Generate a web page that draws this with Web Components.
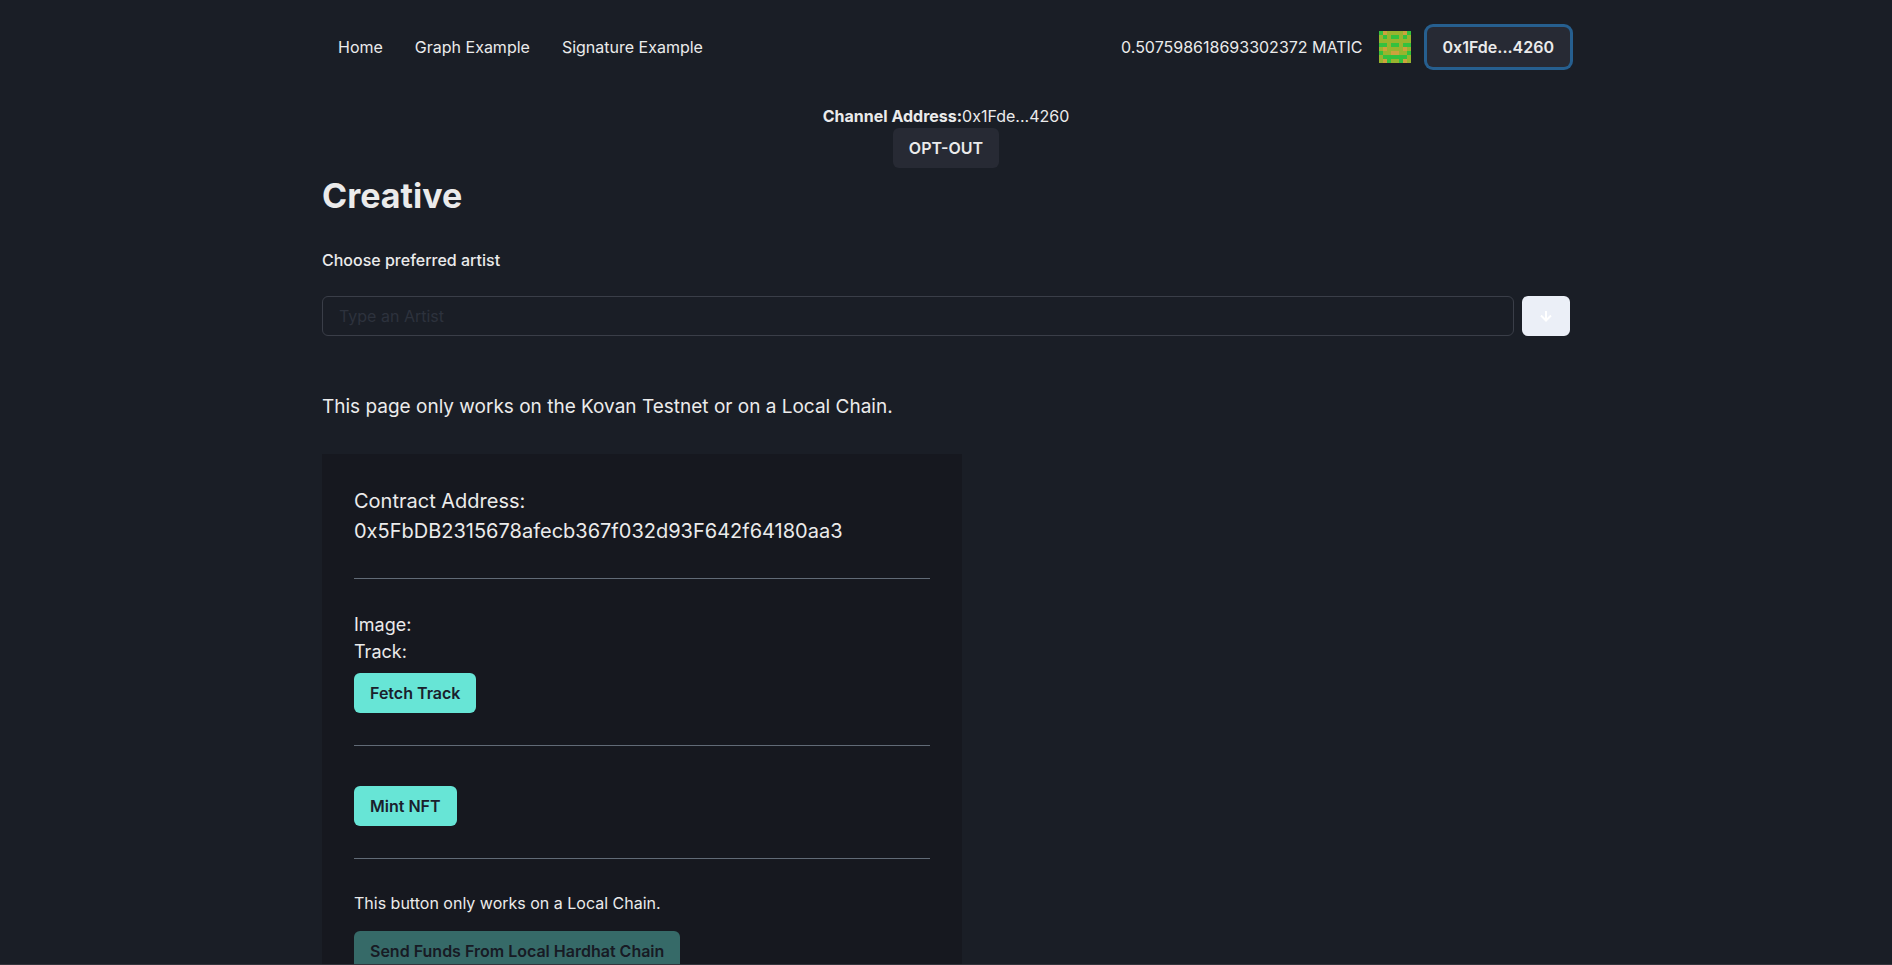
<!DOCTYPE html>
<html lang="en">
<head>
<meta charset="utf-8">
<meta name="viewport" content="width=device-width, initial-scale=1">
<title>Creative</title>
<style>
  html { overflow: hidden; }
  body {
    margin: 0;
    height: 100vh;
    box-sizing: border-box;
    border-bottom: 1px solid #35343c;
    overflow: auto;
    scrollbar-width: none;
    background: #1a1e26;
    color: #ebebeb;
    font: 16px/24px Inter, "Liberation Sans", sans-serif;
  }
</style>
</head>
<body>
<creative-app></creative-app>

<script>
// attaches an open shadow root filled with the given styles and markup
class BaseElement extends HTMLElement {
  constructor() {
    super();
    this.attachShadow({ mode: 'open' }).innerHTML = this.render();
  }
}

class ChakraButton extends BaseElement {
  render() {
    return `
      <style>
        :host { display: inline-flex; }
        button {
          height: 40px;
          min-width: 40px;
          padding: 0 16px;
          border: 0;
          border-radius: 6px;
          background: #272a34;
          color: #ebebeb;
          font: inherit;
          font-weight: 600;
          cursor: pointer;
        }
        :host([variant="teal"]) button { background: #67e5d6; color: #1a202c; }
        :host([variant="light"]) button { background: #ebeff7; color: #fff; }
        :host([focused]) button { box-shadow: 0 0 0 3px #265f8f; }
        button:disabled { opacity: 0.4; cursor: not-allowed; }
        ::slotted(svg) { display: block; }
      </style>
      <button type="button"><slot></slot></button>`;
  }

  connectedCallback() {
    const button = this.shadowRoot.querySelector('button');
    button.disabled = this.hasAttribute('disabled');
    if (this.hasAttribute('label')) {
      button.setAttribute('aria-label', this.getAttribute('label'));
    }
  }
}

// 8x8 mirrored identicon: 0 background, 1 colour, 2 spot
class BlockieIcon extends BaseElement {
  render() {
    return `
      <style>
        :host { display: block; width: 32px; height: 32px; }
        svg { display: block; }
      </style>
      <svg viewBox="0 0 8 8" width="32" height="32" shape-rendering="crispEdges" aria-hidden="true"></svg>`;
  }

  connectedCallback() {
    const rows = ['1200', '0101', '0000', '1101', '0200', '1002', '0111', '0210'];
    const colors = ['#98b42e', '#33c13e', '#cda23c'];
    this.shadowRoot.querySelector('svg').innerHTML = rows.map((half, y) => {
      const row = half + [...half].reverse().join('');
      return [...row].map((c, x) =>
        `<rect x="${x}" y="${y}" width="1" height="1" fill="${colors[c]}"/>`).join('');
    }).join('');
  }
}

class SiteHeader extends BaseElement {
  render() {
    return `
      <style>
        :host { display: block; }
        header {
          display: flex;
          justify-content: space-between;
          align-items: center;
          max-width: 1248px;
          margin: 0 auto;
          padding: 27px 16px 28px;
        }
        nav { display: flex; gap: 32px; padding-left: 16px; }
        a { color: inherit; text-decoration: none; }
        .account { display: flex; align-items: center; gap: 16px; }
      </style>
      <header>
        <nav>
          <a href="#">Home</a>
          <a href="#graph">Graph Example</a>
          <a href="#signature">Signature Example</a>
        </nav>
        <div class="account">
          <span>0.507598618693302372 MATIC</span>
          <blockie-icon></blockie-icon>
          <chakra-button focused>0x1Fde...4260</chakra-button>
        </div>
      </header>`;
  }
}

class ChannelInfo extends BaseElement {
  render() {
    return `
      <style>
        :host { display: flex; flex-direction: column; align-items: center; }
        p { margin: 0; }
        b { font-weight: 700; }
      </style>
      <p><b>Channel Address:</b>0x1Fde...4260</p>
      <chakra-button>OPT-OUT</chakra-button>`;
  }
}

class ArtistSearch extends BaseElement {
  render() {
    return `
      <style>
        :host { display: block; }
        label { display: block; margin-bottom: 24px; font-weight: 500; }
        .row { display: flex; gap: 8px; }
        input {
          flex: 1;
          min-width: 0;
          height: 40px;
          box-sizing: border-box;
          padding: 0 16px;
          border: 1px solid #3a3e48;
          border-radius: 6px;
          background: transparent;
          color: inherit;
          font: inherit;
        }
        input::placeholder { color: #2d323d; opacity: 1; }
      </style>
      <label for="artist">Choose preferred artist</label>
      <div class="row">
        <input id="artist" type="text" placeholder="Type an Artist">
        <chakra-button variant="light" label="Search">
          <svg viewBox="0 0 16 16" width="16" height="16" fill="none" stroke="currentColor" stroke-width="2">
            <path d="M8 3V12M3 7.500L8 12.500L13 7.500"/>
          </svg>
        </chakra-button>
      </div>`;
  }
}

class ContractPanel extends BaseElement {
  render() {
    return `
      <style>
        :host {
          display: block;
          box-sizing: border-box;
          max-width: 640px;
          padding: 32px;
          background: #16181f;
        }
      </style>
      <slot></slot>`;
  }
}

class CreativeApp extends BaseElement {
  render() {
    return `
      <style>
        :host { display: block; }
        main { max-width: 1248px; margin: 0 auto; padding: 9px 16px 32px; }
        h1 { margin: 4px 0 28px; font-size: 34px; line-height: 48px; font-weight: 700; }
        p { margin: 0; }
        .lead { font-size: 20px; line-height: 30px; }
        .notice { margin: 56px 0 32px; font-size: 19px; line-height: 30px; }
        .field { font-size: 18px; line-height: 27px; }
        .fetch { margin-top: 8px; }
        .send { margin-top: 16px; }
        hr { margin: 32px 0; border: 0; border-top: 1px solid #616a76; }
        .mint { margin-top: 8px; }
      </style>
      <site-header></site-header>
      <main>
        <channel-info></channel-info>
        <h1>Creative</h1>
        <artist-search></artist-search>
        <p class="notice">This page only works on the Kovan Testnet or on a Local Chain.</p>
        <contract-panel>
          <p class="lead">Contract Address:</p>
          <p class="lead">0x5FbDB2315678afecb367f032d93F642f64180aa3</p>
          <hr>
          <p class="field">Image:</p>
          <p class="field">Track:</p>
          <chakra-button class="fetch" variant="teal">Fetch Track</chakra-button>
          <hr>
          <chakra-button class="mint" variant="teal">Mint NFT</chakra-button>
          <hr>
          <p>This button only works on a Local Chain.</p>
          <chakra-button class="send" variant="teal" disabled>Send Funds From Local Hardhat Chain</chakra-button>
        </contract-panel>
      </main>`;
  }
}

customElements.define('chakra-button', ChakraButton);
customElements.define('blockie-icon', BlockieIcon);
customElements.define('site-header', SiteHeader);
customElements.define('channel-info', ChannelInfo);
customElements.define('artist-search', ArtistSearch);
customElements.define('contract-panel', ContractPanel);
customElements.define('creative-app', CreativeApp);
</script>
</body>
</html>
